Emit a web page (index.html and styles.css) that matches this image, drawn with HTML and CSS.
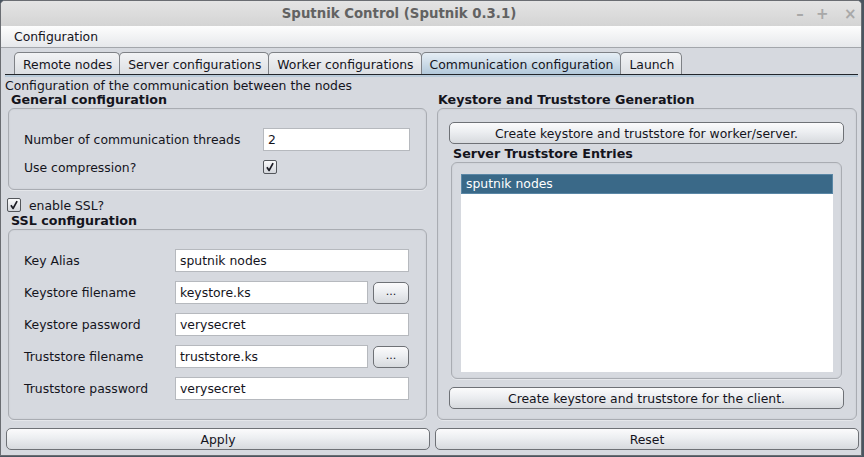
FILE: index.html
```html
<!DOCTYPE html>
<html>
<head>
<meta charset="utf-8">
<link rel="stylesheet" href="styles.css">
</head>
<body>
<div class="window">
  <div class="titlebar">
    <span class="title">Sputnik Control (Sputnik 0.3.1)</span>
    <div class="wm-buttons">
      <span class="wm">&#8211;</span>
      <span class="wm">+</span>
      <span class="wm close">&#215;</span>
    </div>
  </div>
  <div class="menubar"><span class="menu">Configuration</span></div>
  <div class="tabstrip">
    <div class="tab">Remote nodes</div>
    <div class="tab">Server configurations</div>
    <div class="tab">Worker configurations</div>
    <div class="tab selected">Communication configuration</div>
    <div class="tab">Launch</div>
  </div>
  <div class="tabline"></div>
  <div class="content">
    <div class="desc">Configuration of the communication between the nodes</div>
    <div class="columns">
      <div class="col left">
        <div class="group-title">General configuration</div>
        <div class="group general">
          <div class="row">
            <span class="label wide">Number of communication threads</span>
            <div class="field grow">2</div>
          </div>
          <div class="row short">
            <span class="label wide">Use compression?</span>
            <span class="check"><svg width="14" height="14" viewBox="0 0 14 14"><path d="M3.4 7.2 L6 11 L10.6 2.4" fill="none" stroke="#1c1c24" stroke-width="2" stroke-linejoin="round"/></svg></span>
          </div>
        </div>
        <div class="ssl-toggle">
          <span class="check"><svg width="14" height="14" viewBox="0 0 14 14"><path d="M3.4 7.2 L6 11 L10.6 2.4" fill="none" stroke="#1c1c24" stroke-width="2" stroke-linejoin="round"/></svg></span>
          <span class="ssl-label">enable SSL?</span>
        </div>
        <div class="group-title">SSL configuration</div>
        <div class="group ssl">
          <div class="row"><span class="label">Key Alias</span><div class="field grow">sputnik nodes</div></div>
          <div class="row"><span class="label">Keystore filename</span><div class="field grow">keystore.ks</div><div class="btn small">...</div></div>
          <div class="row"><span class="label">Keystore password</span><div class="field grow">verysecret</div></div>
          <div class="row"><span class="label">Truststore filename</span><div class="field grow">truststore.ks</div><div class="btn small">...</div></div>
          <div class="row"><span class="label">Truststore password</span><div class="field grow">verysecret</div></div>
        </div>
      </div>
      <div class="col right">
        <div class="group-title">Keystore and Truststore Generation</div>
        <div class="group keygen">
          <div class="btn">Create keystore and truststore for worker/server.</div>
          <div class="group-title sub">Server Truststore Entries</div>
          <div class="group entries">
            <div class="list">
              <div class="list-item selected">sputnik nodes</div>
            </div>
          </div>
          <div class="btn">Create keystore and truststore for the client.</div>
        </div>
      </div>
    </div>
    <div class="footer">
      <div class="btn">Apply</div>
      <div class="btn">Reset</div>
    </div>
  </div>
</div>
</body>
</html>
```

FILE: styles.css
```css
html, body {
  margin: 0;
  padding: 0;
}
body {
  width: 864px;
  height: 457px;
  background: #4a5560;
  font-family: "DejaVu Sans", sans-serif;
  font-size: 12.4px;
  color: #14141c;
  overflow: hidden;
}
.window {
  width: 860px;
  height: 454px;
  border: 1px solid #6a6d72;
  border-radius: 5px 5px 0 0;
  background: #d6d9df;
  display: flex;
  flex-direction: column;
  overflow: hidden;
}
.titlebar {
  height: 25px;
  flex: none;
  background: linear-gradient(#e4e4e4, #d4d4d4);
  position: relative;
  display: flex;
  align-items: center;
  justify-content: center;
}
.title {
  font-weight: bold;
  font-size: 13.3px;
  color: #626262;
  margin-left: -64px;
}
.wm-buttons {
  position: absolute;
  right: 5px;
  top: 4px;
  display: flex;
  gap: 10px;
}
.wm {
  color: #a8a8a8;
  font-size: 15px;
  font-weight: bold;
  width: 12px;
  text-align: center;
}
.wm.close {
  margin-left: 6px;
}
.menubar {
  height: 21px;
  flex: none;
  background: linear-gradient(#fdfdfd, #e6e8eb);
  border-bottom: 1px solid #a3a6ab;
  display: flex;
  align-items: center;
  padding-left: 13px;
}
.tabstrip {
  display: flex;
  padding: 4px 0 0 13px;
  height: 22px;
  flex: none;
}
.tab {
  height: 22px;
  box-sizing: border-box;
  padding: 1px 7px 0 8px;
  border: 1px solid #7e8186;
  border-bottom: none;
  border-radius: 5px 5px 0 0;
  background: linear-gradient(#f2f3f5, #dcdfe3);
  display: flex;
  align-items: center;
  margin-right: -1px;
}
.tab.selected {
  background: linear-gradient(#e6eef5, #b3c9db);
}
.tabline {
  flex: none;
  margin: 0 3px 0 4px;
  height: 2px;
  border-top: 1px solid #23262b;
  background: #b8cad9;
}
.content {
  flex: 1;
  display: flex;
  flex-direction: column;
  padding: 2px 2px 0 4px;
}
.desc {
  height: 14px;
  line-height: 14px;
}
.columns {
  display: grid;
  grid-template-columns: 424px 424px;
  gap: 5px;
}
.col {
  display: flex;
  flex-direction: column;
}
.group-title {
  font-weight: bold;
  font-size: 12.7px;
  padding-left: 6px;
  height: 14px;
  line-height: 14px;
}
.col.right .group-title {
  padding-left: 4px;
}
.group {
  margin: 0 2px 0 3px;
  border: 1px solid #a9acb2;
  border-radius: 6px;
  box-shadow: inset 0 0 2px rgba(0,0,0,0.08), 0 1px 0 #e4e6ea;
}
.group.general {
  margin-top: 1px;
  padding: 19px 16px 0 15px;
  box-sizing: border-box;
  height: 82px;
}
.row {
  display: flex;
  align-items: center;
  height: 23px;
  margin-bottom: 9px;
}
.row.short {
  height: 14px;
}
.label {
  width: 151px;
  flex: none;
}
.label.wide {
  width: 239px;
}
.field {
  background: #fff;
  border: 1px solid #b6b9be;
  display: flex;
  align-items: center;
  padding-left: 4px;
  box-sizing: border-box;
  height: 23px;
}
.grow {
  flex: 1;
}
.check {
  width: 14px;
  height: 14px;
  box-sizing: border-box;
  border: 1px solid #53565b;
  border-radius: 2px;
  background: linear-gradient(#fbfbfc, #d3d6db);
  display: inline-flex;
  align-items: center;
  justify-content: center;
  flex: none;
}
.check svg {
  display: block;
}
.ssl-toggle {
  display: flex;
  align-items: center;
  height: 14px;
  margin: 8px 0 2px 2px;
  gap: 8px;
}
.group.ssl {
  margin-top: 1px;
  padding: 19px 17px 0 15px;
  box-sizing: border-box;
  height: 191px;
}
.btn {
  height: 22px;
  box-sizing: border-box;
  border: 1px solid #6e7176;
  border-radius: 5px;
  background: linear-gradient(#fbfbfc 0%, #eceef1 45%, #d7dade 100%);
  display: flex;
  align-items: center;
  justify-content: center;
}
.btn.small {
  width: 36px;
  flex: none;
  margin-left: 5px;
  padding-bottom: 2px;
  font-size: 11px;
}
.group.keygen {
  margin: 1px 1px 0 3px;
  height: 312px;
  box-sizing: border-box;
  padding: 13px 12px 0 11px;
}
.group-title.sub {
  margin-top: 3px;
  padding-left: 5px;
  height: 15px;
}
.group.entries {
  margin: 0 2px 8px 2px;
  height: 217px;
  box-sizing: border-box;
  padding: 11px 8px 6px 9px;
}
.list {
  background: #fff;
  height: 100%;
}
.list-item {
  height: 20px;
  line-height: 19px;
  padding-left: 5px;
}
.list-item.selected {
  background: #3a6988;
  color: #fff;
  box-shadow: inset 0 0 0 1px #5a87a6;
}
.footer {
  display: grid;
  grid-template-columns: 424px 424px;
  gap: 5px;
  margin-top: 8px;
  padding-left: 1px;
}
```
